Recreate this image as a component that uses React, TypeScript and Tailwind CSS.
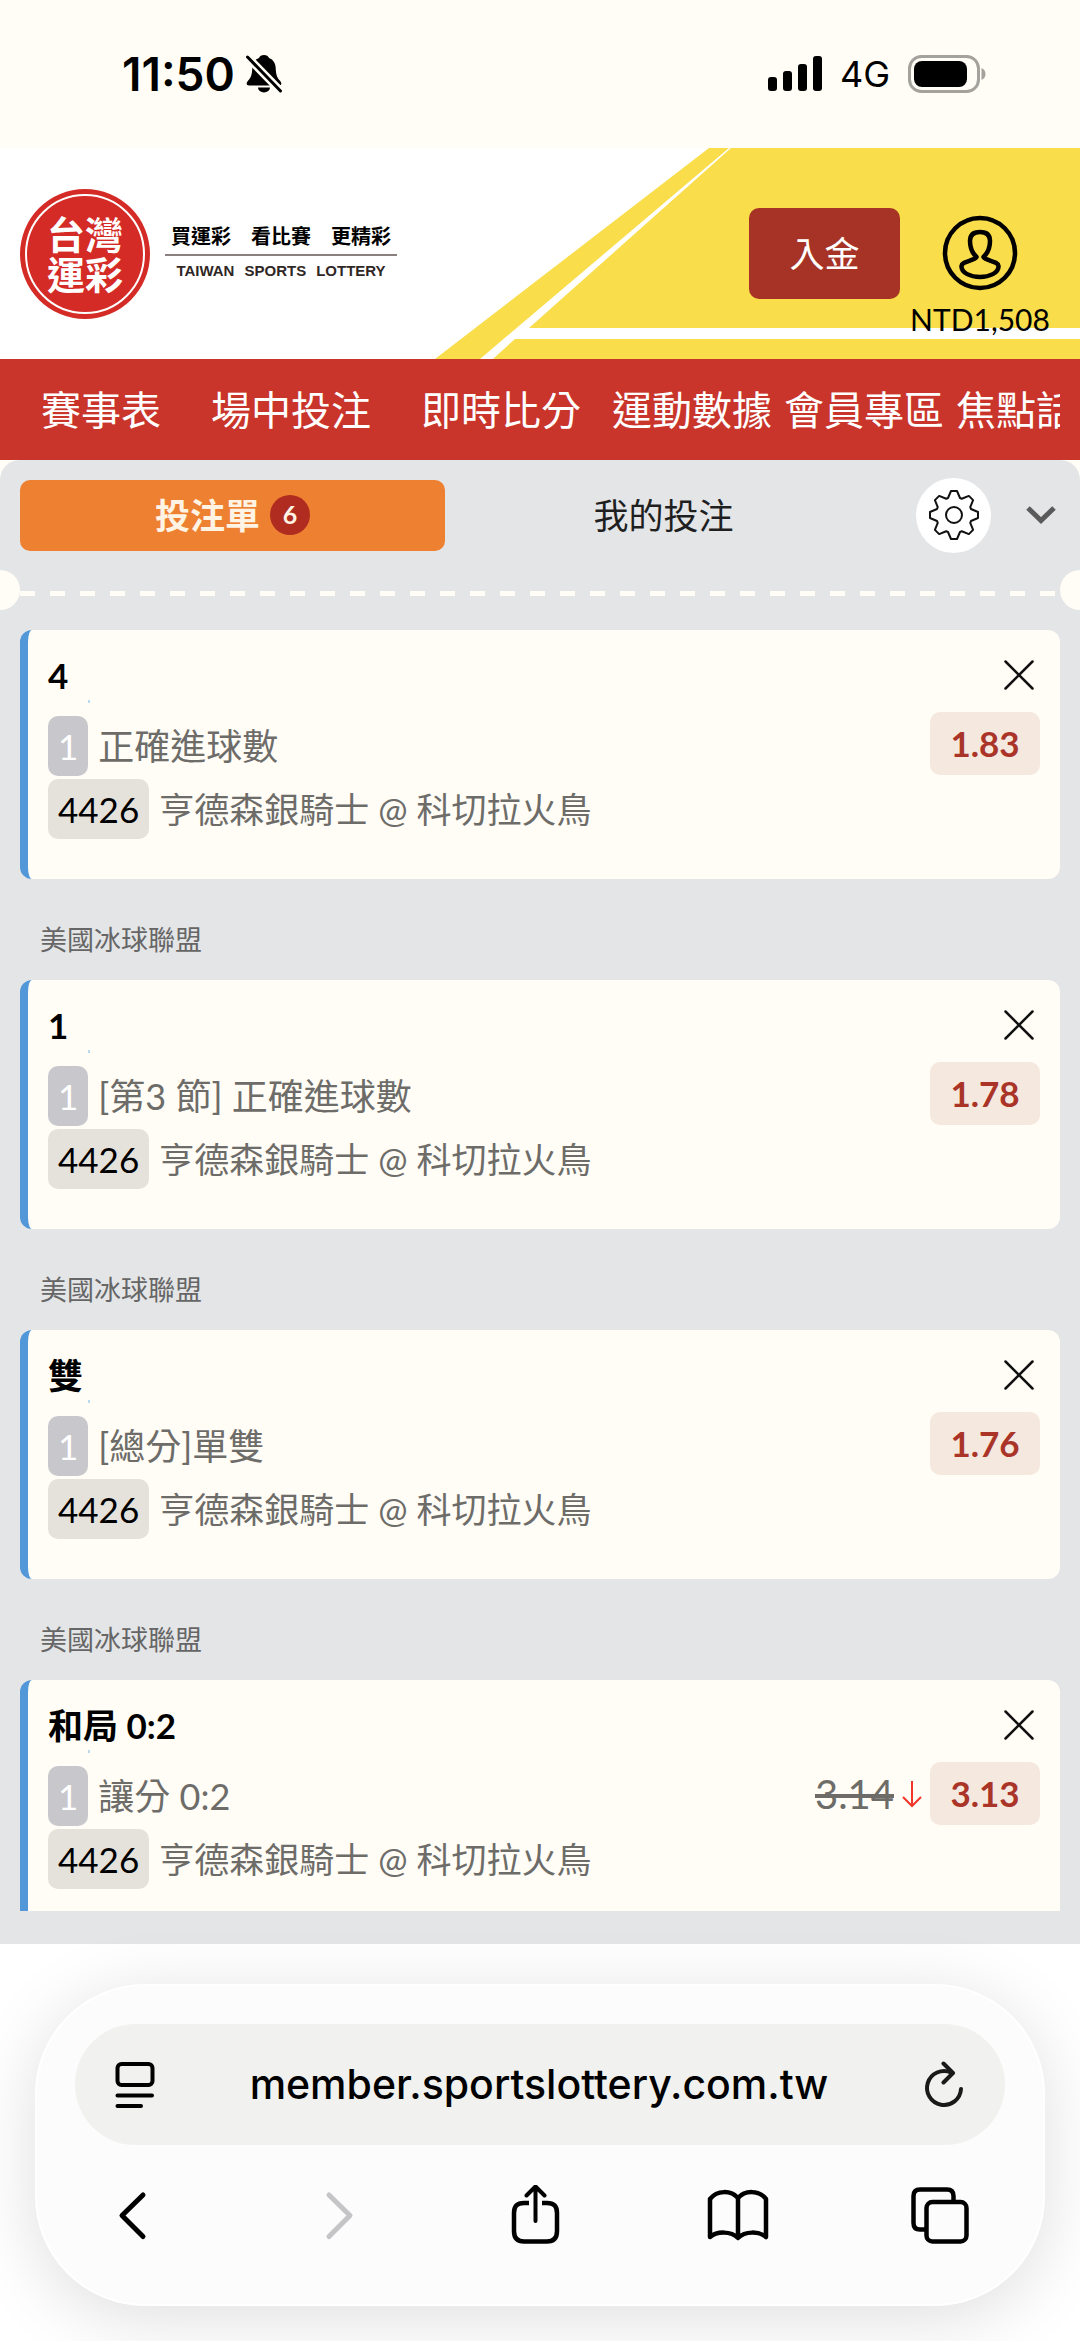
import { useState } from "react";

interface Bet {
  id: number;
  league?: string;
  pick: string;
  market: string;
  odds: string;
  oldOdds?: string;
}

const NAV_WIDE = ["賽事表", "場中投注", "即時比分"];
const NAV_TIGHT = ["運動數據", "會員專區", "焦點話題"];

const BETS: Bet[] = [
  { id: 1, pick: "4", market: "正確進球數", odds: "1.83" },
  { id: 2, league: "美國冰球聯盟", pick: "1", market: "[第3 節] 正確進球數", odds: "1.78" },
  { id: 3, league: "美國冰球聯盟", pick: "雙", market: "[總分]單雙", odds: "1.76" },
  { id: 4, league: "美國冰球聯盟", pick: "和局 0:2", market: "讓分 0:2", odds: "3.13", oldOdds: "3.14" },
];

// 8-tooth gear outline
const GEAR_PATH =
  Array.from({ length: 8 }, (_, i) => {
    const a = (i * Math.PI) / 4;
    return [[-6, -17], [-3, -24], [3, -24], [6, -17]]
      .map(([x, y]) => {
        const px = 26 + x * Math.cos(a) - y * Math.sin(a);
        const py = 26 + x * Math.sin(a) + y * Math.cos(a);
        return `${px.toFixed(2)} ${py.toFixed(2)}`;
      })
      .join("L");
  }).reduce((d, seg, i) => d + (i === 0 ? "M" : "L") + seg, "") + "Z";

function StatusBar() {
  return (
    <div className="flex h-[148px] items-center justify-between pr-[94px] pl-[122px] [font-family:Inter,sans-serif]">
      <div className="flex items-center gap-[10px]">
        <span className="text-[46px] leading-none font-semibold">11:50</span>
        <svg width="38" height="40" viewBox="0 0 38 40" aria-hidden="true">
          <path d="M19 1c-2.600 0-4.300 1.200-5 3C9.500 5.500 7.500 9.500 7.300 14c-.3 7-1.300 9.500-4.500 13-1.800 2-1.500 4.500 1.300 4.500h29.800c2.800 0 3.100-2.500 1.300-4.500-3.200-3.500-4.200-6-4.500-13-.2-4.500-2.200-8.500-6.700-10C23.300 2.200 21.600 1 19 1zM13 33.500a6 5 0 0 0 12 0z" />
          <path d="M2 2.500L36 37.500" stroke="#fffdf6" strokeWidth="8" />
          <path d="M2.500 3L35.500 37" stroke="#000" strokeWidth="3" strokeLinecap="round" />
        </svg>
      </div>
      <div className="flex items-center gap-[18px]">
        <svg width="54" height="36" viewBox="0 0 54 36" aria-hidden="true">
          <rect x="0" y="21" width="9" height="14" rx="3" />
          <rect x="15" y="15" width="9" height="20" rx="3" />
          <rect x="30" y="8" width="9" height="27" rx="3" />
          <rect x="45" y="0" width="9" height="35" rx="3" />
        </svg>
        <span className="text-[36px] leading-none">4G</span>
        <svg width="78" height="38" viewBox="0 0 78 38" aria-hidden="true">
          <rect x="1.500" y="1.500" width="69" height="35" rx="12" fill="none" stroke="#a3a29d" strokeWidth="3" />
          <rect x="6" y="6" width="53" height="26" rx="8" />
          <path d="M73.500 13c2.500 1 4 3.200 4 6s-1.500 5-4 6z" fill="#a3a29d" />
        </svg>
      </div>
    </div>
  );
}

function Header() {
  return (
    <header className="relative flex h-[211px] items-center justify-between bg-white pr-5 pl-5">
      <svg
        className="absolute inset-0 size-full"
        viewBox="0 0 1080 211"
        preserveAspectRatio="none"
        fill="#f9dd4a"
        aria-hidden="true"
      >
        <path d="M709 0H729L480 211H435Z" />
        <path d="M731 0H1080V180H529Z" />
        <path d="M515 191H1080V211H493Z" />
      </svg>
      <a href="#" className="relative flex items-center gap-[15px] text-black">
        <span className="flex size-[130px] items-center justify-center rounded-full bg-[#d42b27] p-[5px]">
          <span className="flex size-full flex-col items-center justify-center rounded-full border-2 border-white text-[38px] leading-[40px] font-bold text-white">
            <span>台灣</span>
            <span>運彩</span>
          </span>
        </span>
        <span className="flex flex-col items-center pb-1">
          <span className="text-[20px] leading-[30px] font-bold">買運彩　看比賽　更精彩</span>
          <span className="my-[3px] h-[2px] w-[232px] bg-[#8a807e]" />
          <span className="flex gap-[10px] text-[15px] leading-[24px] font-bold text-[#2f2725] [font-family:'Liberation_Sans',sans-serif]">
            <span>TAIWAN</span>
            <span>SPORTS</span>
            <span>LOTTERY</span>
          </span>
        </span>
      </a>
      <div className="relative flex items-start">
        <button className="h-[91px] w-[151px] rounded-[10px] bg-[#a63325] text-[35px] text-white">入金</button>
        <button className="mt-[7px] -mb-10 flex w-[160px] flex-col items-center">
          <svg width="76" height="76" viewBox="0 0 76 76" fill="none" stroke="#000" strokeWidth="4.5" aria-hidden="true">
            <circle cx="38" cy="38" r="35" />
            <path
              d="M34.500 42C29 37 28 32 28 26C28 20 31 17 38 17C45 17 48 20 48 26C48 32 47 37 41.500 42C44 46 56 46 56.500 51C57 58 47 62 38 62C29 62 19 58 19.500 51C20 46 32 46 34.500 42Z"
              strokeLinejoin="round"
            />
          </svg>
          <span className="mt-2 text-[30px] leading-[40px]">NTD1,508</span>
        </button>
      </div>
    </header>
  );
}

function BetCard({ bet, cut, onRemove }: { bet: Bet; cut: boolean; onRemove: () => void }) {
  return (
    <article
      className={`flex justify-between border-l-8 border-[#5297d8] bg-[#fffdf6] pt-5 pr-5 pl-5 ${
        cut ? "rounded-t-xl pb-[22px]" : "rounded-xl pb-10"
      }`}
    >
      <div>
        <h3 className="text-[35px] leading-[50px] font-bold">{bet.pick}</h3>
        <span className="mb-[13px] ml-10 block h-[3px] w-[2px] bg-[#bcd9ee]" />
        <div className="flex items-center gap-[10px] leading-[60px]">
          <span className="rounded-[10px] bg-[#c8c7cc] px-[10px] text-[35px] text-white">1</span>
          <span className="text-[36px] text-[#6d6c69]">{bet.market}</span>
        </div>
        <div className="mt-[3px] flex items-center gap-[10px] text-[35px] leading-[60px]">
          <span className="rounded-[10px] bg-[#e5e2dc] px-[10px]">4426</span>
          <span className="text-[#6d6c69]">亨德森銀騎士 @ 科切拉火鳥</span>
        </div>
      </div>
      <div className="flex flex-col items-end">
        <button aria-label="移除" onClick={onRemove} className="flex h-[50px] w-[42px] items-center justify-center">
          <svg width="30" height="30" viewBox="0 0 30 30" stroke="#111" strokeWidth="2.5" strokeLinecap="round">
            <path d="M1.500 1.500L28.500 28.500M28.500 1.500L1.500 28.500" />
          </svg>
        </button>
        <div className="mt-3 flex items-center gap-2">
          {bet.oldOdds && (
            <>
              <s className="text-[40px] leading-[60px] text-[#6d6c69]">{bet.oldOdds}</s>
              <svg width="20" height="28" viewBox="0 0 20 28" fill="none" stroke="#f0362a" strokeWidth="2" aria-hidden="true">
                <path d="M10 1V26M1 17L10 26L19 17" />
              </svg>
            </>
          )}
          <span className="w-[110px] rounded-[10px] bg-[#f5e8df] text-center text-[35px] leading-[63px] font-bold text-[#a93427]">
            {bet.odds}
          </span>
        </div>
      </div>
    </article>
  );
}

function BrowserBar() {
  return (
    <footer className="bg-white px-[35px] pt-10 pb-[35px] text-black">
      <div className="rounded-[110px] border-2 border-white bg-[#fcfcfc] px-[38px] pt-[38px] pb-[59px] shadow-[0_12px_70px_rgba(0,0,0,0.13)]">
        <div className="flex h-[121px] items-center justify-between rounded-full bg-[#f1f1ef] px-10">
          <button aria-label="閱讀模式">
            <svg width="40" height="46" viewBox="0 0 40 46" fill="none" stroke="#000" strokeWidth="4" strokeLinecap="round">
              <rect x="2.500" y="2" width="35" height="21" rx="4" />
              <path d="M2.500 33.500H37M2.500 44H26" />
            </svg>
          </button>
          <span className="text-[41px] font-medium [font-family:Inter,sans-serif]">member.sportslottery.com.tw</span>
          <button aria-label="重新載入">
            <svg width="42" height="48" viewBox="0 0 42 48" fill="none" stroke="#1a1a1a" strokeWidth="4" strokeLinecap="round" strokeLinejoin="round">
              <path d="M28 11.500A17 17 0 1 0 38 28" />
              <path d="M20.500 2.500L30 12L20.500 21.500" />
            </svg>
          </button>
        </div>
        <div className="mt-10 mr-[35px] ml-[27px] flex justify-between">
          <button aria-label="上一頁">
            <svg width="60" height="60" viewBox="0 0 60 60" fill="none" stroke="#000" strokeWidth="5" strokeLinecap="round" strokeLinejoin="round">
              <path d="M41 10L20 30.500L41 51.500" />
            </svg>
          </button>
          <button aria-label="下一頁" disabled>
            <svg width="60" height="60" viewBox="0 0 60 60" fill="none" stroke="#c5c5c7" strokeWidth="5" strokeLinecap="round" strokeLinejoin="round">
              <path d="M25 10L46 30.500L25 51.500" />
            </svg>
          </button>
          <button aria-label="分享">
            <svg width="60" height="60" viewBox="0 0 60 60" fill="none" stroke="#000" strokeWidth="4.500">
              <path d="M24 18H19C12 18 9 21 9 28V46C9 53 12 56.500 19 56.500H42C49 56.500 52 53 52 46V28C52 21 49 18 42 18H37" />
              <path d="M30.500 36V1.500M21.500 10.500L30.500 1.500L39.500 10.500" strokeWidth="4" strokeLinecap="round" strokeLinejoin="round" />
            </svg>
          </button>
          <button aria-label="書籤">
            <svg width="62" height="60" viewBox="0 0 62 60" fill="none" stroke="#000" strokeWidth="4.500" strokeLinecap="round" strokeLinejoin="round">
              <path d="M31 13C24 5 10 5 3 14V52C10 46 24 46 31 53C38 46 52 46 59 52V14C52 5 38 5 31 13V52" />
            </svg>
          </button>
          <button aria-label="分頁">
            <svg width="60" height="60" viewBox="0 0 60 60" fill="none" stroke="#000" strokeWidth="4.500">
              <path d="M43.500 16V11C43.500 6.500 41.500 4.500 37 4.500H10C5.500 4.500 3.500 6.500 3.500 11V38C3.500 42.500 5.500 44.500 10 44.500H16" />
              <rect x="16.500" y="17" width="40" height="39.500" rx="6" />
            </svg>
          </button>
        </div>
      </div>
    </footer>
  );
}

export default function App() {
  const [bets, setBets] = useState(BETS);

  return (
    <div className="min-h-screen w-full overflow-hidden bg-[#fffdf6] text-black [font-family:Lato,'Noto_Sans_CJK_TC',sans-serif]">
      <StatusBar />
      <Header />

      <nav className="flex h-[101px] items-center bg-[#c9342b] pr-5 pl-4">
        <div className="flex overflow-hidden text-[40px] leading-[60px] whitespace-nowrap text-white">
          {NAV_WIDE.map((label) => (
            <a key={label} href="#" className="shrink-0 px-[25px]">{label}</a>
          ))}
          {NAV_TIGHT.map((label) => (
            <a key={label} href="#" className="shrink-0 px-[6px]">{label}</a>
          ))}
        </div>
      </nav>

      <main className="rounded-t-[20px] bg-[#e4e5e7] pb-[33px]">
        <div className="flex h-[110px] items-center px-5">
          <div className="flex flex-1 gap-[6px] text-[35px]">
            <button className="flex h-[71px] flex-1 items-center justify-center gap-[10px] rounded-[10px] bg-[#ee8031] font-bold text-[#fff3e4]">
              投注單
              <span className="flex size-10 items-center justify-center rounded-full bg-[#b02b20] text-[25px] text-[#fff3e4]">6</span>
            </button>
            <button className="h-[71px] flex-1 text-[#1f1f1f]">我的投注</button>
          </div>
          <button aria-label="設定" className="ml-10 flex size-[75px] items-center justify-center rounded-full bg-white">
            <svg width="52" height="52" viewBox="0 0 52 52" fill="none" stroke="#111" strokeWidth="2" strokeLinejoin="round">
              <path d={GEAR_PATH} />
              <circle cx="26" cy="26" r="8" />
            </svg>
          </button>
          <button aria-label="收合" className="ml-[31px] flex w-[38px] justify-center">
            <svg width="30" height="18" viewBox="0 0 30 18" fill="none" stroke="#5a5a5a" strokeWidth="5">
              <path d="M2 2L15 14.500L28 2" />
            </svg>
          </button>
        </div>

        {/* ticket perforation */}
        <div className="flex h-10 items-center">
          <span className="h-10 w-5 rounded-r-full bg-[#fffdf6]" />
          <span className="mt-[6px] h-[5px] flex-1 bg-[linear-gradient(90deg,#fffdf6_50%,transparent_50%)] bg-[length:30px_5px]" />
          <span className="h-10 w-5 rounded-l-full bg-[#fffdf6]" />
        </div>

        <div className="px-5 pt-5">
          {bets.map((bet, i) => (
            <section key={bet.id}>
              {bet.league && (
                <p className="px-5 pt-[41px] pb-5 text-[27px] leading-[40px] text-[#666]">{bet.league}</p>
              )}
              <BetCard
                bet={bet}
                cut={i === bets.length - 1}
                onRemove={() => setBets((prev) => prev.filter((b) => b.id !== bet.id))}
              />
            </section>
          ))}
        </div>
      </main>

      <BrowserBar />
    </div>
  );
}
